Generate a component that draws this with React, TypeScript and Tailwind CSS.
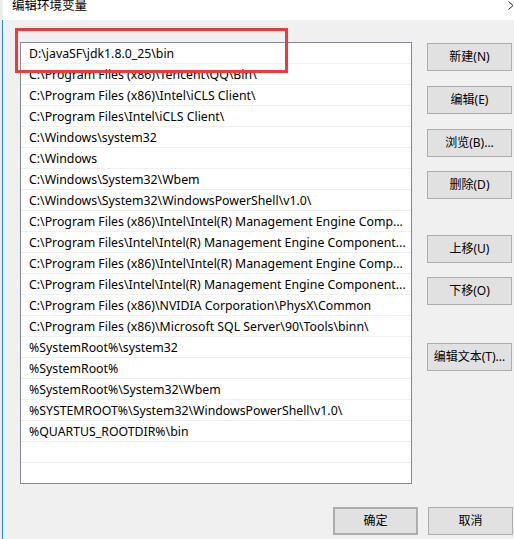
const paths = [
  "D:\\javaSF\\jdk1.8.0_25\\bin",
  "C:\\Program Files (x86)\\Tencent\\QQ\\Bin\\",
  "C:\\Program Files (x86)\\Intel\\iCLS Client\\",
  "C:\\Program Files\\Intel\\iCLS Client\\",
  "C:\\Windows\\system32",
  "C:\\Windows",
  "C:\\Windows\\System32\\Wbem",
  "C:\\Windows\\System32\\WindowsPowerShell\\v1.0\\",
  "C:\\Program Files (x86)\\Intel\\Intel(R) Management Engine Comp...",
  "C:\\Program Files\\Intel\\Intel(R) Management Engine Component...",
  "C:\\Program Files (x86)\\Intel\\Intel(R) Management Engine Comp...",
  "C:\\Program Files\\Intel\\Intel(R) Management Engine Component...",
  "C:\\Program Files (x86)\\NVIDIA Corporation\\PhysX\\Common",
  "C:\\Program Files (x86)\\Microsoft SQL Server\\90\\Tools\\binn\\",
  "%SystemRoot%\\system32",
  "%SystemRoot%",
  "%SystemRoot%\\System32\\Wbem",
  "%SYSTEMROOT%\\System32\\WindowsPowerShell\\v1.0\\",
  "%QUARTUS_ROOTDIR%\\bin",
  "",
  "",
];

function Btn({ label, className = "" }: { label: string; className?: string }) {
  return (
    <button
      className={`flex h-[28px] w-[85px] items-center justify-center border border-[#adadad] bg-[#e1e1e1] text-[12px] text-black ${className}`}
    >
      {label}
    </button>
  );
}

export default function App() {
  return (
    <div className="relative flex h-[539px] w-[514px] overflow-hidden bg-[#f0f0f0] font-['Noto_Sans','Noto_Sans_CJK_SC',sans-serif] text-black">
      {/* edge of the window behind + blue border */}
      <div className="w-[2px] bg-[#ececec]" />
      <div className="mt-[20px] w-px bg-[#2b88d8]" />

      <div className="flex flex-1 flex-col">
        {/* title bar */}
        <div className="relative h-[20px] bg-white">
          <span className="absolute left-[9px] top-[-2px] text-[12.5px] leading-[16px] text-black">
            编辑环境变量
          </span>
          <svg className="absolute right-0 top-[1px]" width="6" height="9" viewBox="0 0 6 9">
            <path d="M0.5 0.5 L5 4.5 L0.5 8.5" fill="none" stroke="#222" strokeWidth="1" />
          </svg>
        </div>

        <div className="flex">
          {/* path list */}
          <div className="ml-[17px] mt-[22px] h-[442px] w-[392px] overflow-hidden border border-[#858a96] bg-white">
            {paths.map((p, i) => (
              <div
                key={i}
                className="flex h-[21px] items-center border-b border-[#f0f0f0] pl-[8px] pt-[3px] text-[12.3px] leading-none whitespace-nowrap"
              >
                {p}
              </div>
            ))}
          </div>

          {/* action buttons */}
          <div className="ml-[15px] mt-[23px] flex flex-col">
            <Btn label="新建(N)" />
            <Btn label="编辑(E)" className="mt-[15px]" />
            <Btn label="浏览(B)..." className="mt-[15px]" />
            <Btn label="删除(D)" className="mt-[14px]" />
            <Btn label="上移(U)" className="mt-[36px]" />
            <Btn label="下移(O)" className="mt-[14px]" />
            <Btn label="编辑文本(T)..." className="mt-[38px]" />
          </div>
        </div>

        {/* dialog buttons */}
        <div className="ml-[330px] mt-[23px] flex gap-[10px]">
          <Btn label="确定" className="border-2 border-[#0078d7]" />
          <Btn label="取消" />
        </div>
      </div>

      {/* red annotation box */}
      <div className="absolute left-[15px] top-[28px] h-[45px] w-[273px] border-[3px] border-[#f03a3a]" />
    </div>
  );
}
